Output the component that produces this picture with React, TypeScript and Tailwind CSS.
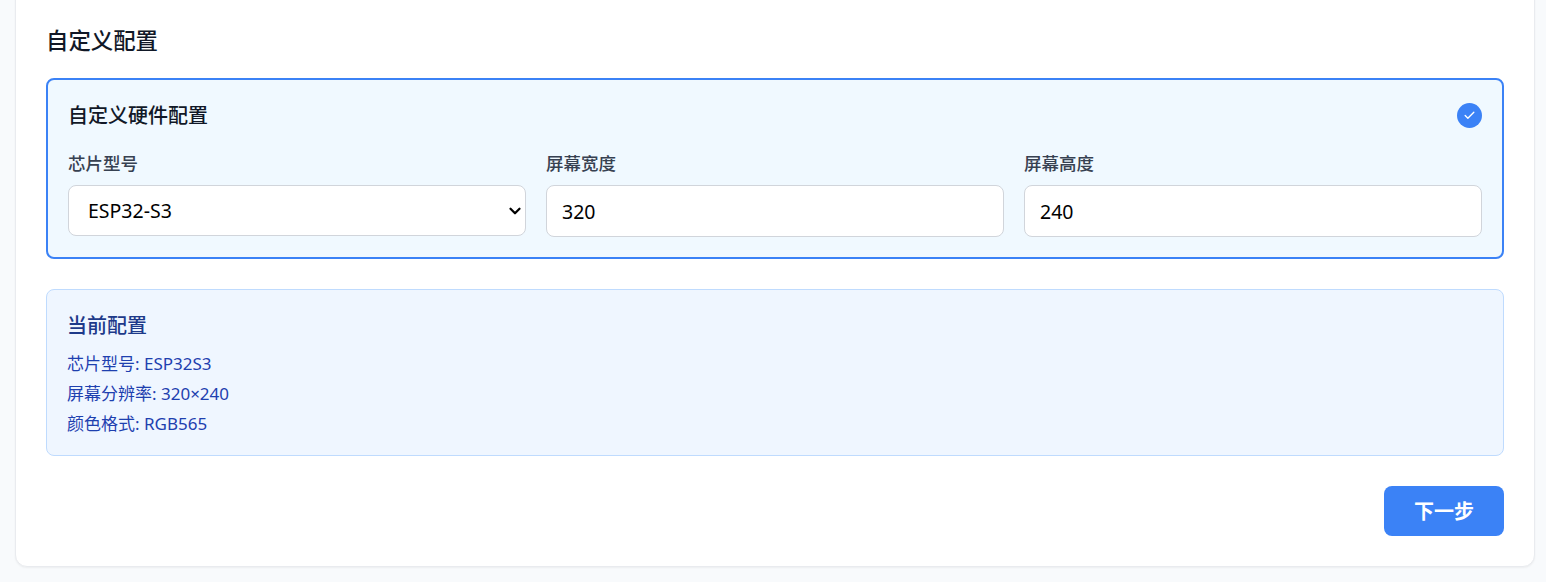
import { Check, ChevronDown } from "lucide-react";

function Field({ label, children }: { label: string; children: React.ReactNode }) {
  return (
    <div className="flex flex-col">
      <label className="mb-[10px] text-[17.5px] leading-[24px] font-medium text-[#374151]">{label}</label>
      {children}
    </div>
  );
}

export default function App() {
  return (
    <div className="h-[582px] overflow-hidden bg-[#f8fafc] pr-[11px] pl-[15px] font-['Noto_Sans','Noto_Sans_CJK_SC',sans-serif]">
      <div className="-mt-[100px] h-[667px] rounded-xl border border-[#e9ebef] bg-white px-[30px] pt-[125px] shadow-xs">
        <h3 className="mb-[22px] text-[22.4px] leading-[30px] font-medium text-[#111827]">自定义配置</h3>

        <div className="rounded-lg border-2 border-[#3b82f6] bg-[#f0f9ff] px-5 pt-5 pb-5">
          <div className="mb-[19px] flex items-center justify-between">
            <h4 className="text-[20px] leading-[32px] font-medium text-[#111827]">自定义硬件配置</h4>
            <div className="mb-[2px] flex h-[25px] w-[25px] items-center justify-center rounded-full bg-[#3b82f6]">
              <Check size={13} strokeWidth={2.5} className="text-white" />
            </div>
          </div>
          <div className="grid grid-cols-3 gap-5">
            <Field label="芯片型号">
              <div className="relative">
                <select className="h-[51px] w-full appearance-none rounded-lg border border-[#d1d5db] bg-white pr-2 pl-[19px] text-[19.5px] text-black" defaultValue="ESP32-S3">
                  <option>ESP32-S3</option>
                </select>
                <ChevronDown size={18} strokeWidth={3} className="pointer-events-none absolute top-[17px] right-[2px] text-black" />
              </div>
            </Field>
            <Field label="屏幕宽度">
              <input className="h-[52px] rounded-lg border border-[#d1d5db] bg-white px-[15px] text-[19.5px] text-black" defaultValue="320" />
            </Field>
            <Field label="屏幕高度">
              <input className="h-[52px] rounded-lg border border-[#d1d5db] bg-white px-[15px] text-[19.5px] text-black" defaultValue="240" />
            </Field>
          </div>
        </div>

        <div className="mt-[30px] h-[167px] rounded-lg border border-[#bfdbfe] bg-[#eff6ff] px-5 pt-5">
          <h4 className="mb-[7px] text-[20px] leading-[32px] font-medium text-[#1e3a8a]">当前配置</h4>
          <p className="text-[17px] leading-[30px] text-[#1e40af]">芯片型号: ESP32S3</p>
          <p className="text-[17px] leading-[30px] text-[#1e40af]">屏幕分辨率: 320×240</p>
          <p className="text-[17px] leading-[30px] text-[#1e40af]">颜色格式: RGB565</p>
        </div>

        <div className="mt-[30px] flex justify-end">
          <button className="h-[50px] w-[120px] rounded-lg bg-[#3b82f6] pt-[2px] text-[20px] font-semibold text-white">下一步</button>
        </div>
      </div>
    </div>
  );
}
